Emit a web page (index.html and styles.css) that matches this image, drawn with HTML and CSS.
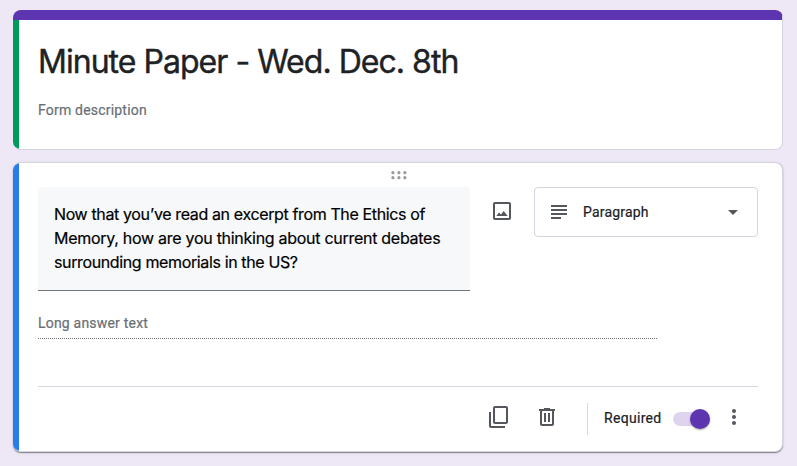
FILE: index.html
```html
<!DOCTYPE html>
<html lang="en">
<head>
    <meta charset="utf-8">
    <title>Minute Paper - Wed. Dec. 8th</title>
    <link rel="stylesheet" href="styles.css">
</head>
<body>
    <div class="card header-card">
        <h1>Minute Paper - Wed. Dec. 8th</h1>
        <p class="description">Form description</p>
    </div>

    <div class="card question-card">
        <div class="drag-handle">
            <svg width="16" height="9" viewBox="0 0 16 9">
                <circle cx="1.9" cy="1.7" r="1.6"/><circle cx="7.9" cy="1.7" r="1.6"/><circle cx="13.9" cy="1.7" r="1.6"/>
                <circle cx="1.9" cy="6.7" r="1.6"/><circle cx="7.9" cy="6.7" r="1.6"/><circle cx="13.9" cy="6.7" r="1.6"/>
            </svg>
        </div>

        <div class="question-row">
            <div class="question">
                Now that you’ve read an excerpt from The Ethics of<br>
                <span class="wide">Memory, how are you thinking about current debates</span><br>
                surrounding memorials in the US?
            </div>
            <svg class="icon image-icon" viewBox="0 0 24 24">
                <path d="M19 5v14H5V5h14m0-2H5c-1.1 0-2 .9-2 2v14c0 1.1.9 2 2 2h14c1.1 0 2-.9 2-2V5c0-1.1-.9-2-2-2z"/>
                <path d="M6.300 17l2.700-3.500 2 2 2.700-3.500 4 5z"/>
            </svg>
            <div class="select">
                <svg class="icon" viewBox="0 0 24 24"><path d="M14 17H4v2h10v-2zm6-8H4v2h16V9zM4 15h16v-2H4v2zM4 5v2h16V5H4z"/></svg>
                <span class="select-label">Paragraph</span>
                <svg class="icon" viewBox="0 0 24 24"><path d="M7 10l5 5 5-5z"/></svg>
            </div>
        </div>

        <div class="answer">Long answer text</div>

        <div class="footer">
            <svg class="icon" viewBox="0 0 24 24">
                <path d="M19 1H8c-1.1 0-2 .9-2 2v14c0 1.1.9 2 2 2h11c1.1 0 2-.9 2-2V3c0-1.1-.9-2-2-2zm0 16H8V3h11v14z"/>
                <path d="M2 7h2v14h14v2H4c-1.1 0-2-.9-2-2V7z"/>
            </svg>
            <svg class="icon delete" viewBox="0 0 24 24">
                <path d="M15 4V3H9v1H4v2h1v13c0 1.1.9 2 2 2h10c1.1 0 2-.9 2-2V6h1V4h-5zm2 15H7V6h10v13z"/>
                <path d="M9 8h2v9H9zM13 8h2v9h-2z"/>
            </svg>
            <div class="required">
                <span class="required-label">Required</span>
                <span class="toggle"><span class="knob"></span></span>
            </div>
            <svg class="icon more" viewBox="0 0 24 24"><circle cx="12" cy="6" r="2"/><circle cx="12" cy="12" r="2"/><circle cx="12" cy="18" r="2"/></svg>
        </div>
    </div>
</body>
</html>
```
FILE: styles.css
```css
* {
    box-sizing: border-box;
}
body {
    margin: 0;
    padding: 10px 14px 0 13px;
    height: 466px;
    overflow: hidden;
    background-color: #ede7f6;
    font-family: Roboto, "Liberation Sans", sans-serif;
    font-size: 14px;
    color: #202124;
    -webkit-text-stroke: 0.2px;
}
.card {
    position: relative;
    overflow: hidden;
    background-color: #fff;
    border: 1px solid #d5d5e0;
    border-left: none;
    border-radius: 8px;
    padding-left: 25px;
    padding-right: 24px;
}
/* accent stripe down the left edge */
.card::before {
    content: "";
    position: absolute;
    left: 0;
    top: 0;
    bottom: 0;
    width: 6px;
    background-color: #2a7bee;
}
.header-card {
    height: 140px;
    margin-bottom: 12px;
    padding-top: 22px;
    border-top: 10px solid #5e35b1;
}
.header-card::before {
    background-color: #009a5b;
}
h1 {
    margin: 0;
    font-family: Inter, sans-serif;
    font-size: 32px;
    font-weight: 400;
    line-height: 40px;
    letter-spacing: -0.97px;
    white-space: nowrap;
    -webkit-text-stroke: 0.4px;
}
.description {
    margin: 18px 0 0;
    line-height: 20px;
    letter-spacing: 0.2px;
    color: #6a6f75;
}
.question-card {
    height: 290px;
    box-shadow: 0 1px 1px rgba(0, 0, 0, 0.4), 0 1px 3px rgba(0, 0, 0, 0.1);
}
.drag-handle {
    display: flex;
    justify-content: center;
    height: 24px;
    padding: 8px 0 0 1px;
    fill: #9a9a9a;
}
.question-row {
    display: flex;
    align-items: flex-start;
}
.question {
    width: 432px;
    height: 104px;
    padding: 15px 16px;
    background-color: #f7f8fa;
    border-bottom: 1px solid #70757a;
    border-radius: 4px 4px 0 0;
    font-family: Inter, sans-serif;
    font-size: 16px;
    line-height: 24px;
    letter-spacing: -0.37px;
    color: #000;
    white-space: nowrap;
}
.wide {
    letter-spacing: -0.28px;
}
.icon {
    display: block;
    flex: none;
    width: 24px;
    height: 24px;
    fill: #54585d;
}
.image-icon {
    margin: 12px 20px 0;
}
.select {
    display: flex;
    align-items: center;
    width: 224px;
    height: 50px;
    padding: 0 12px;
    border: 1px solid #d5d5df;
    border-radius: 4px;
}
.select-label {
    flex: 1;
    padding-left: 12px;
    letter-spacing: 0.2px;
}
.answer {
    width: 619px;
    height: 26px;
    margin-top: 22px;
    border-bottom: 1px dotted #777;
    line-height: 20px;
    letter-spacing: 0.2px;
    color: #6a6f75;
}
.footer {
    display: flex;
    justify-content: flex-end;
    margin-top: 47px;
    padding-top: 18px;
    border-top: 1px solid #d5d5df;
}
.delete {
    margin-left: 24px;
}
.required {
    display: flex;
    align-items: center;
    height: 32px;
    margin: -2px 12px 0 28px;
    padding-left: 16px;
    border-left: 1px solid #d9dadd;
}
.required-label {
    width: 69px;
    padding-bottom: 2px;
    letter-spacing: 0.3px;
}
.toggle {
    position: relative;
    width: 37px;
    height: 14px;
    border-radius: 7px;
    background: linear-gradient(to right, #dfd4f0 30px, transparent 30px);
}
.knob {
    position: absolute;
    right: 0;
    top: -3px;
    width: 20px;
    height: 20px;
    border-radius: 50%;
    background-color: #5e35b1;
    box-shadow: 0 1px 2px rgba(0, 0, 0, 0.35);
}
.more {
    margin-right: 12px;
}
```
